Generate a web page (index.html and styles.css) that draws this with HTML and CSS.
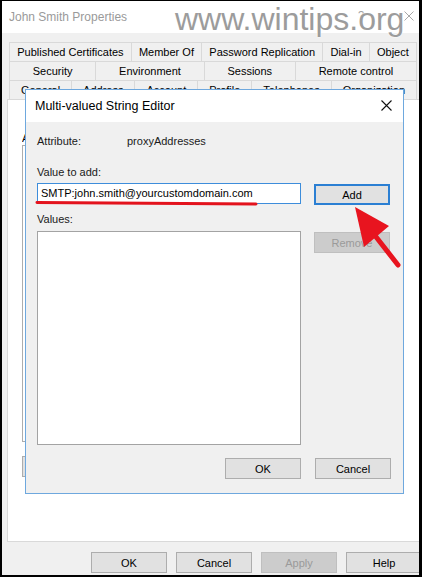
FILE: index.html
```html
<!DOCTYPE html>
<html>
<head>
<meta charset="utf-8">
<link rel="stylesheet" href="styles.css">
</head>
<body>
<div class="screen">
  <div class="window">
    <div class="titlebar">
      <span class="title">John Smith Properties</span>
      <span class="help-q">?</span>
      <svg class="win-close" width="10" height="10" viewBox="0 0 10 10"><path d="M0.5 0.5L9.5 9.5M9.5 0.5L0.5 9.5" stroke="#a8a8a8" stroke-width="1"/></svg>
    </div>
    <div class="win-body">
      <div class="tabs">
        <div class="tab-row">
          <div class="tab">Published Certificates</div>
          <div class="tab">Member Of</div>
          <div class="tab">Password Replication</div>
          <div class="tab">Dial-in</div>
          <div class="tab">Object</div>
        </div>
        <div class="tab-row">
          <div class="tab">Security</div>
          <div class="tab">Environment</div>
          <div class="tab">Sessions</div>
          <div class="tab">Remote control</div>
        </div>
        <div class="tab-row">
          <div class="tab">General</div>
          <div class="tab">Address</div>
          <div class="tab">Account</div>
          <div class="tab">Profile</div>
          <div class="tab">Telephones</div>
          <div class="tab">Organization</div>
        </div>
      </div>
      <div class="page">
        <div class="page-label">Attributes:</div>
        <div class="page-list"></div>
        <div class="page-btn"></div>
      </div>
      <div class="win-buttons">
        <div class="btn">OK</div>
        <div class="btn">Cancel</div>
        <div class="btn disabled">Apply</div>
        <div class="btn">Help</div>
      </div>
    </div>
  </div>

  <div class="watermark">www.wintips.org</div>

  <div class="dialog">
    <div class="dlg-title">
      <span class="dlg-title-text">Multi-valued String Editor</span>
      <svg class="dlg-close" width="11" height="11" viewBox="0 0 11 11"><path d="M0.5 0.5L10.5 10.5M10.5 0.5L0.5 10.5" stroke="#111" stroke-width="1.1"/></svg>
    </div>
    <div class="dlg-body">
      <div class="attr-row">
        <span class="attr-label">Attribute:</span>
        <span class="attr-value">proxyAddresses</span>
      </div>
      <div class="v-label">Value to add:</div>
      <div class="dlg-main">
        <div class="col-left">
          <div class="textbox">SMTP:john.smith@yourcustomdomain.com</div>
          <div class="values-label">Values:</div>
          <div class="listbox"></div>
        </div>
        <div class="col-right">
          <div class="btn btn-default">Add</div>
          <div class="btn disabled btn-remove">Remove</div>
        </div>
      </div>
      <div class="dlg-buttons">
        <div class="btn">OK</div>
        <div class="btn">Cancel</div>
      </div>
    </div>
  </div>

  <svg class="annot" width="422" height="577" viewBox="0 0 422 577">
    <path d="M37 202.5 L256 204" stroke="#e3131d" stroke-width="3" stroke-linecap="round" fill="none"/>
    <polygon points="355,207 389,226 364,247" fill="#e8141f"/>
    <path d="M373 233 L398 265" stroke="#e8141f" stroke-width="5" stroke-linecap="round"/>
  </svg>
</div>
</body>
</html>
```

FILE: styles.css
```css
html, body {
  margin: 0;
  padding: 0;
  background: #000;
}

.screen {
  position: relative;
  width: 422px;
  height: 577px;
  box-sizing: border-box;
  border-style: solid;
  border-color: #000;
  border-width: 1px 3px 2px 2px;
  overflow: hidden;
  background: #f0f0f0;
  font-family: "Liberation Sans", Arial, sans-serif;
  color: #000;
}

.window {
  display: flex;
  flex-direction: column;
  height: 100%;
}

.titlebar {
  height: 32px;
  flex: none;
  background: #fff;
  display: flex;
  align-items: center;
  padding-left: 7px;
  position: relative;
}

.title {
  font-size: 12px;
  color: #9a9a9a;
}

.help-q {
  margin-left: auto;
  font-size: 11px;
  color: #a0a0a0;
  margin-right: 40px;
  margin-top: -4px;
}

.win-close {
  margin-right: 5px;
  margin-top: -2px;
}

.win-body {
  flex: 1;
  display: flex;
  flex-direction: column;
  padding: 9px 0 2px 5px;
}

.tabs {
  margin-left: 2px;
  width: 408px;
}

.tab-row {
  display: flex;
  margin-top: -1px;
}

.tab-row:first-child {
  margin-top: 0;
}

.tab {
  flex: 1 1 auto;
  border: 1px solid #d9d9d9;
  margin-left: -1px;
  text-align: center;
  font-size: 11px;
  line-height: 18px;
  white-space: nowrap;
  background: #f0f0f0;
}

.tab:first-child {
  margin-left: 0;
}

.page {
  height: 443px;
  box-sizing: border-box;
  background: #fff;
  border: 1px solid #d9d9d9;
  margin-top: -1px;
  margin-right: -3px;
  padding: 32px 0 0 14px;
  flex: none;
}

.page-label {
  font-size: 11px;
  line-height: 13px;
  width: 3px;
  overflow: hidden;
  white-space: nowrap;
}

.page-list {
  height: 297px;
  width: 300px;
  box-sizing: border-box;
  border: 1px solid #adadad;
  background: #fff;
}

.page-btn {
  margin-top: 14px;
  width: 75px;
  height: 21px;
  box-sizing: border-box;
  border: 1px solid #adadad;
  background: #e1e1e1;
}

.win-buttons {
  display: flex;
  gap: 9px;
  margin-top: 10px;
  padding-left: 84px;
}

.btn {
  width: 76px;
  height: 21px;
  box-sizing: border-box;
  border: 1px solid #adadad;
  background: #e1e1e1;
  font-size: 11px;
  display: flex;
  align-items: center;
  justify-content: center;
  flex: none;
  color: #000;
}

.btn.disabled {
  color: #9a9a9a;
  border-color: #bfbfbf;
  background: #cccccc;
}

.watermark {
  position: absolute;
  left: 173px;
  top: 2px;
  font-size: 32px;
  line-height: 32px;
  color: #9c9c9c;
  white-space: nowrap;
  text-shadow: 0 0 1px #fff, 0 0 2px #fff;
}

.dialog {
  position: absolute;
  left: 23px;
  top: 88px;
  width: 379px;
  height: 405px;
  box-sizing: border-box;
  border: 1px solid #6ea8de;
  background: #f0f0f0;
  display: flex;
  flex-direction: column;
}

.dlg-title {
  height: 32px;
  flex: none;
  background: #fff;
  display: flex;
  align-items: center;
  justify-content: space-between;
  padding: 0 11px 0 9px;
}

.dlg-title-text {
  font-size: 12.5px;
  color: #000;
  margin-top: -1px;
}

.dlg-close {
  margin-top: -1px;
}

.dlg-body {
  padding: 12px 12px 0 11px;
  display: flex;
  flex-direction: column;
  font-size: 11px;
  color: #1a1a1a;
}

.attr-row {
  display: flex;
  line-height: 14px;
}

.attr-label {
  width: 90px;
}

.v-label {
  margin-top: 17px;
  line-height: 14px;
}

.dlg-main {
  display: flex;
  gap: 13px;
  margin-top: 4px;
}

.col-left {
  width: 264px;
  display: flex;
  flex-direction: column;
}

.col-right {
  display: flex;
  flex-direction: column;
}

.textbox {
  height: 21px;
  box-sizing: border-box;
  border: 1px solid #3d8ddb;
  background: #fff;
  padding-left: 3px;
  line-height: 19px;
  white-space: nowrap;
  color: #000;
}

.values-label {
  margin-top: 8px;
  line-height: 14px;
}

.listbox {
  margin-top: 5px;
  height: 214px;
  box-sizing: border-box;
  border: 1px solid #a3a3a3;
  background: #fff;
}

.btn-default {
  margin-top: 1px;
  border-color: #2b7fd3;
  box-shadow: inset 0 0 0 1px #2b7fd3;
}

.btn-remove {
  margin-top: 27px;
}

.dlg-buttons {
  display: flex;
  justify-content: flex-end;
  gap: 14px;
  margin-top: 13px;
}

.annot {
  position: absolute;
  left: -2px;
  top: -1px;
  pointer-events: none;
}
```
